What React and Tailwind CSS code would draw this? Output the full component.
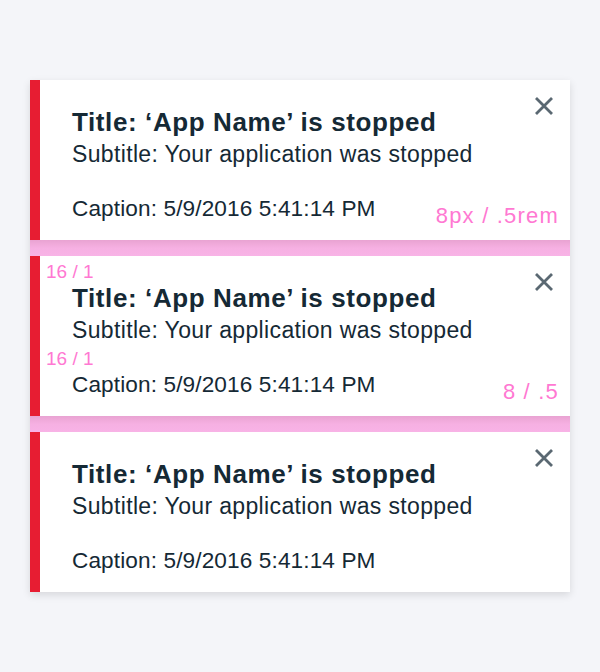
import React from "react";

function CloseIcon() {
  return (
    <svg width="20" height="20" viewBox="0 0 20 20" className="block">
      <path d="M2 2 L18 18 M18 2 L2 18" stroke="#5a6872" strokeWidth="2.8" strokeLinecap="butt" fill="none" />
    </svg>
  );
}

function Card({ children }) {
  return (
    <div className="relative flex h-40 bg-white border-l-[10px] border-[#e71d32]">
      <div className="flex flex-1 flex-col pl-8 pt-[26px] text-[#152935]">
        <div className="text-[26px] leading-8 font-bold tracking-[0.6px] whitespace-nowrap">
          Title: ‘App Name’ is stopped
        </div>
        <div className="text-[23px] leading-8 tracking-[0.35px] whitespace-nowrap">
          Subtitle: Your application was stopped
        </div>
        <div className="mt-[23px] text-[22.6px] leading-8 tracking-[0.12px] whitespace-nowrap">
          Caption: 5/9/2016 5:41:14 PM
        </div>
      </div>
      <button className="self-start mt-4 mr-4 p-0">
        <CloseIcon />
      </button>
      {children}
    </div>
  );
}

function Spacer() {
  return <div className="h-4 bg-gradient-to-b from-[#e9a3d2] via-[#f6b0e2] to-[#f8b3e6]" />;
}

const pink = "text-[#ff78d2] whitespace-nowrap";

export default function App() {
  return (
    <div className="w-[600px] h-[672px] bg-[#f4f5f9] pt-20 px-[30px] font-['Liberation_Sans',Arial,sans-serif]">
      <div className="flex flex-col shadow-[0_3px_8px_rgba(0,0,0,0.12)]">
        <Card>
          <span className={"absolute right-[11px] top-[125px] text-[22px] leading-[22px] tracking-[1.2px] " + pink}>
            8px / .5rem
          </span>
        </Card>
        <Spacer />
        <Card>
          <span className={"absolute left-[6px] top-[6px] text-[19px] leading-[19px] " + pink}>
            16 / 1
          </span>
          <span className={"absolute left-[6px] top-[93px] text-[19px] leading-[19px] " + pink}>
            16 / 1
          </span>
          <span className={"absolute right-[11px] top-[125px] text-[22px] leading-[22px] tracking-[1.2px] " + pink}>
            8 / .5
          </span>
        </Card>
        <Spacer />
        <Card />
      </div>
    </div>
  );
}
